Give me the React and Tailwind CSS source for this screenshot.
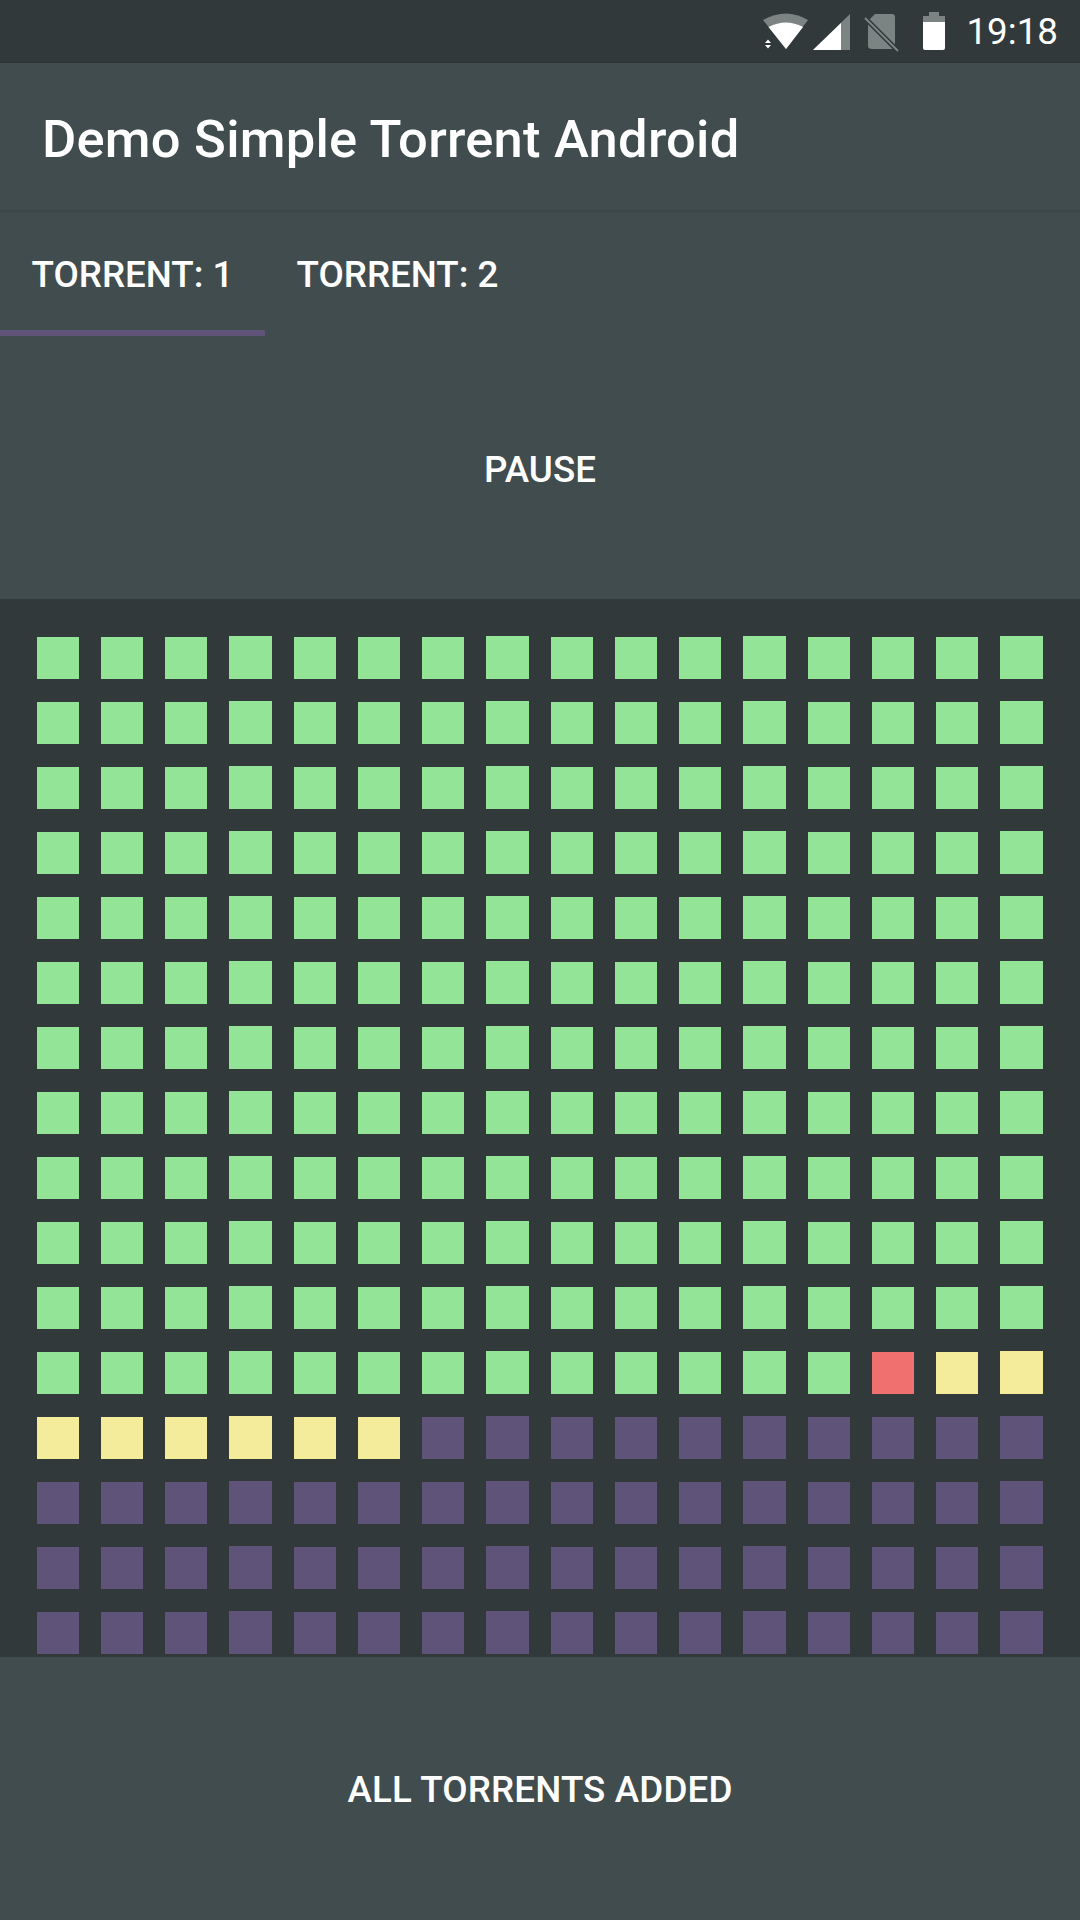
const COLS = 16;

// piece states in reading order, like the torrent piece view
const pieces = [];
for (let i = 0; i < 16 * COLS; i++) {
  if (i < 11 * COLS + 13) pieces.push('done');
  else if (i === 11 * COLS + 13) pieces.push('active');
  else if (i < 12 * COLS + 6) pieces.push('queued');
  else pieces.push('empty');
}

const pieceClass = {
  done: 'bg-[#94e497]',
  active: 'bg-[#f07070]',
  queued: 'bg-[#f4ec9a]',
  empty: 'bg-[#5f5379]',
};

function StatusIcons() {
  return (
    <svg width="200" height="63" viewBox="0 0 200 63" className="block">
      {/* wifi */}
      <path d="M4 20 Q27 7 49 20 L27 49 Z" fill="#7c8383" />
      <path d="M9.500 27 Q27 18 44 27 L27 49 Z" fill="#ffffff" />
      <path d="M9 39.500 L12 43 L6 43 Z M6 45 L12 45 L9 48.500 Z" fill="#ffffff" />
      {/* signal */}
      <path d="M54 50 L91 14 L91 50 Z" fill="#7c8383" />
      <path d="M54 50 L82 23 L82 50 Z" fill="#ffffff" />
      {/* no sim */}
      <path d="M116 14 L133 14 Q136 14 136 17 L136 46 Q136 49 133 49 L113 49 Q109 49 109 46 L109 21 Z" fill="#7c8383" />
      <path d="M105 17 L139 51" stroke="#32393b" strokeWidth="5" />
      <path d="M106 18 L139 51" stroke="#7c8383" strokeWidth="2" />
      {/* battery */}
      <path d="M170 12 L180 12 L180 16 L186 16 L186 22 L164 22 L164 16 L170 16 Z" fill="#7c8383" />
      <path d="M164 22 L186 22 L186 48 Q186 50 184 50 L166 50 Q164 50 164 48 Z" fill="#ffffff" />
    </svg>
  );
}

export default function App() {
  return (
    <div className="w-[1080px] h-[1920px] flex flex-col overflow-hidden bg-[#414c4e] text-white font-['Roboto',sans-serif]">
      <div className="h-[63px] shrink-0 bg-[#32393b] flex items-center justify-end pr-[22px]">
        <StatusIcons />
        <span className="ml-[7px] pt-[2px] text-[36.75px] leading-none">19:18</span>
      </div>

      <div className="h-[147px] shrink-0 flex items-center pl-[42px] pt-[5px] shadow-[0_1px_3px_rgba(0,0,0,0.14)] relative">
        <h1 className="text-[52.5px] font-medium leading-none tracking-[0.23px]">Demo Simple Torrent Android</h1>
      </div>

      <div className="h-[126px] shrink-0 flex">
        <div className="w-[265px] h-full flex items-center justify-center border-b-[6px] border-[#5f5379] pt-[10px]">
          <span className="text-[36.75px] font-medium leading-none">TORRENT: 1</span>
        </div>
        <div className="w-[265px] h-full flex items-center justify-center pt-[4px]">
          <span className="text-[36.75px] font-medium leading-none">TORRENT: 2</span>
        </div>
      </div>

      <button className="h-[263px] shrink-0 flex items-center justify-center pt-[6px] text-[36.75px] font-medium leading-none">
        PAUSE
      </button>

      <div className="h-[1058px] shrink-0 bg-[#32393b] overflow-hidden px-[37px] pt-[38px]">
        <div className="grid grid-cols-[repeat(4,42px_42px_42px_43px)] gap-x-[22px] gap-y-[23px]">
          {pieces.map((p, i) => (
            <div key={i} className={`${i % 4 === 3 ? 'h-[43px] -mt-px' : 'h-[42px]'} ${pieceClass[p]}`} />
          ))}
        </div>
      </div>

      <button className="flex-1 flex items-center justify-center pt-[4px] text-[36.75px] font-medium leading-none tracking-[0.13px]">
        ALL TORRENTS ADDED
      </button>
    </div>
  );
}
